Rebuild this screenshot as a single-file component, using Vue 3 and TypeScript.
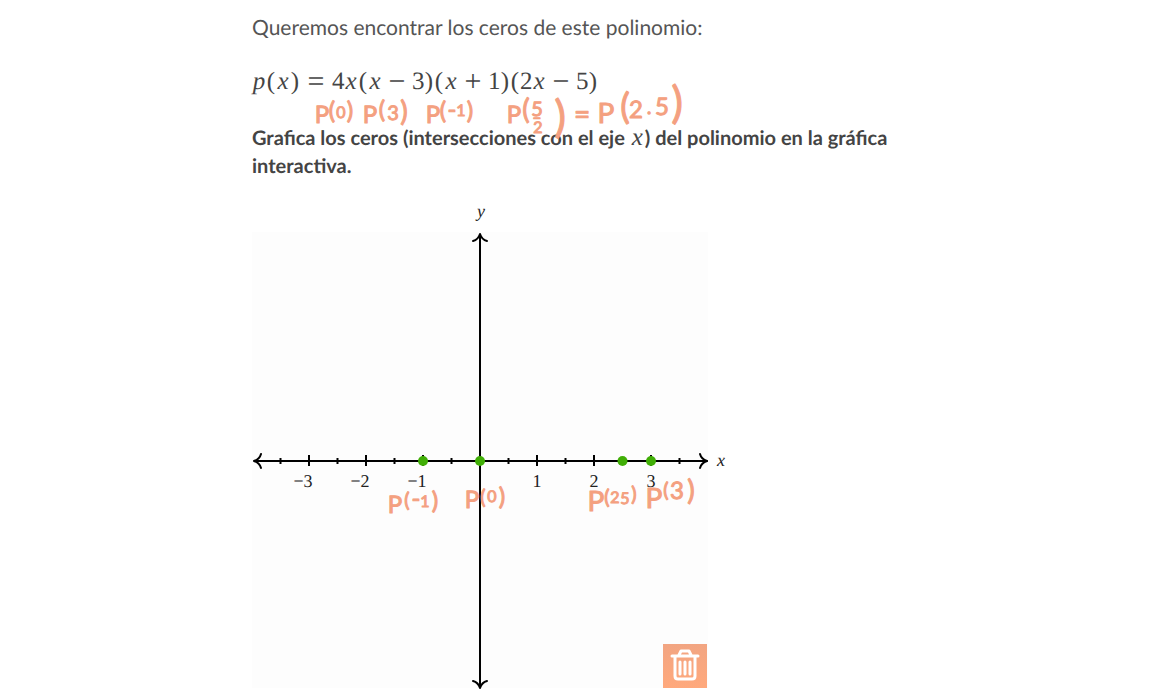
<script setup lang="ts">
import { ref } from 'vue'

type Kind = 'var' | 'num' | 'paren' | 'rel' | 'bin'
interface Token { text: string; kind: Kind }
interface Glyph { c: string; x: number; y: number; size: number }

const kindOf = (c: string): Kind => {
  if (/[a-z]/.test(c)) return 'var'
  if (/[0-9]/.test(c)) return 'num'
  if (c === '=') return 'rel'
  if (c === '(' || c === ')') return 'paren'
  return 'bin'
}
const formula: Token[] = [...'p(x)=4x(x−3)(x+1)(2x−5)'].map((text) => ({ text, kind: kindOf(text) }))

const g = (c: string, x: number, y: number, size: number): Glyph => ({ c, x, y, size })

// Handwritten notes: centre, baseline and size of each character
const formulaNotes: Glyph[][] = [
  [g('P', 70, 123, 24), g('(', 80, 119, 24), g('0', 89, 118, 16), g(')', 98, 119, 24)],
  [g('P', 118, 123, 24), g('(', 130, 118, 24), g('3', 141, 120, 20), g(')', 152, 121, 28)],
  [g('P', 181, 123, 24), g('(', 191, 119, 24), g('-', 200, 118, 24), g('1', 209, 116, 16), g(')', 218, 119, 24)],
  [
    g('P', 262, 123, 24), g('(', 274, 119, 28), g('5', 285, 116, 20), g('–', 285, 123, 16), g('2', 286, 133, 16),
    g(')', 308, 132, 44), g('=', 330, 124, 28), g('P', 354, 123, 28), g('(', 373, 119, 36), g('2', 384, 118, 24),
    g('.', 397, 114, 20), g('5', 410, 115, 24), g(')', 425, 118, 44),
  ],
]
const graphNotes: Glyph[][] = [
  [g('P', 143, 281, 24), g('(', 155, 275, 20), g('-', 164, 275, 24), g('1', 173, 275, 16), g(')', 183, 277, 24)],
  [g('P', 220, 276, 24), g('(', 231, 272, 20), g('0', 240, 270, 16), g(')', 250, 273, 24)],
  [g('P', 344, 279, 28), g('(', 355, 272, 20), g('2', 363, 271, 16), g('5', 373, 272, 16), g(')', 382, 269, 20)],
  [g('P', 402, 276, 28), g('(', 414, 265, 20), g('3', 425, 267, 24), g(')', 439, 268, 28)],
]

const unit = 57
const origin = 228
const px = (value: number): number => origin + value * unit
const majors = [-3, -2, -1, 1, 2, 3]
const minors = [-3.5, -2.5, -1.5, -0.5, 0.5, 1.5, 2.5, 3.5]
const points = ref<number[]>([-1, 0, 2.5, 3])
const label = (n: number): string => (n < 0 ? `−${-n}` : `${n}`)
</script>

<template>
  <main class="exercise">
    <p class="intro">Queremos encontrar los ceros de este polinomio:</p>

    <div class="formula">
      <span v-for="(t, i) in formula" :key="i" :class="t.kind">{{ t.text }}</span>
    </div>

    <p class="task">
      Grafica los ceros (intersecciones con el eje <i class="inline-x">x</i>) del polinomio en la gráfica interactiva.
    </p>

    <svg class="notes" width="440" height="150" aria-label="Notas">
      <text v-for="(note, i) in formulaNotes" :key="i" class="ink">
        <tspan v-for="(m, k) in note" :key="k" :x="m.x" :y="m.y" :font-size="m.size">{{ m.c }}</tspan>
      </text>
    </svg>

    <section class="graph">
      <svg class="plane" width="456" height="456" viewBox="0 0 456 456" aria-label="Gráfica interactiva">
        <g class="axis">
          <path d="M3 229H455" />
          <path d="M228 3V455" />
          <path d="M9 222C8 226 5 228 2 229C5 230 8 232 9 236" />
          <path d="M448 222C449 226 452 228 455 229C452 230 449 232 448 236" />
          <path d="M221 9C225 8 227 5 228 2C229 5 231 8 235 9" />
          <path d="M221 449C225 450 227 453 228 456C229 453 231 450 235 449" />
          <line v-for="n in majors" :key="n" :x1="px(n)" :x2="px(n)" y1="223" y2="234" />
          <line v-for="n in minors" :key="n" :x1="px(n)" :x2="px(n)" y1="226" y2="232" />
        </g>
        <g class="labels">
          <text v-for="n in majors" :key="n" :x="n < 0 ? px(n) - 6 : px(n)" y="255">{{ label(n) }}</text>
          <text class="name" x="229" y="-15">y</text>
          <text class="name" x="469" y="234">x</text>
        </g>
        <circle v-for="p in points" :key="p" class="point" :cx="px(p)" cy="229" r="5" />
        <text v-for="(note, i) in graphNotes" :key="i" class="ink">
          <tspan v-for="(m, k) in note" :key="k" :x="m.x" :y="m.y" :font-size="m.size">{{ m.c }}</tspan>
        </text>
      </svg>
      <button class="trash" type="button" aria-label="Borrar puntos" @click="points = []">
        <svg width="32" height="34" viewBox="0 0 32 34">
          <path d="M3 7H29M10 6L12 2H20L22 6M6 8V27Q6 30 9 30H23Q26 30 26 27V8" stroke-width="3" />
          <path d="M11 13V25M16 13V25M21 13V25" stroke-width="3" />
        </svg>
      </button>
    </section>
  </main>
</template>

<style>
body {
  margin: 0;
  background: #fff;
}
</style>

<style scoped>
.exercise {
  position: relative;
  box-sizing: border-box;
  max-width: 654px;
  margin: 0 auto;
  padding: 14px 0 12px;
  color: #444;
  font: 20px/28px Lato, sans-serif;
  text-rendering: geometricPrecision;
}
.intro,
.task {
  margin: 0;
}
.intro {
  color: #555;
  font-size: 21px;
}
.task {
  font-weight: 700;
}
.inline-x {
  margin: 0 2px;
  font: italic 400 25px/20px "Liberation Serif", serif;
}
.formula {
  display: flex;
  height: 42px;
  padding: 19px 0 21px;
  font: 25px/42px "Liberation Serif", serif;
}
.formula span {
  flex: none;
  text-align: center;
}
.formula .var {
  width: 14px;
  font-style: italic;
}
.formula .num {
  width: 12px;
}
.formula .paren {
  width: 10px;
}
.formula .rel {
  width: 32px;
  font-size: 30px;
}
.formula .bin {
  width: 30px;
  font-size: 30px;
}
.notes {
  position: absolute;
  top: 0;
  left: 0;
  pointer-events: none;
}
.ink {
  fill: #f4a080;
  stroke: #f4a080;
  stroke-width: 1;
  stroke-linecap: round;
  stroke-linejoin: round;
  font-family: Lato, sans-serif;
  text-anchor: middle;
}
.graph {
  position: relative;
  width: 456px;
  margin-top: 52px;
  background: #fdfdfd;
}
.plane {
  display: block;
  overflow: visible;
}
.axis {
  fill: none;
  stroke: #000;
  stroke-width: 2;
  stroke-linecap: round;
  stroke-linejoin: round;
}
.axis line {
  stroke-linecap: butt;
}
.labels {
  fill: #222;
  font: 18px "Liberation Serif", serif;
  text-anchor: middle;
}
.labels .name {
  font-style: italic;
}
.point {
  fill: #40ae06;
}
.trash {
  position: absolute;
  right: 1px;
  bottom: 0;
  display: flex;
  align-items: center;
  justify-content: center;
  width: 44px;
  height: 44px;
  padding: 0;
  border: 0;
  background: linear-gradient(#f2a582, #ffa97c);
  cursor: pointer;
}
.trash path {
  fill: none;
  stroke: #fff;
  stroke-linecap: round;
  stroke-linejoin: round;
}
</style>
